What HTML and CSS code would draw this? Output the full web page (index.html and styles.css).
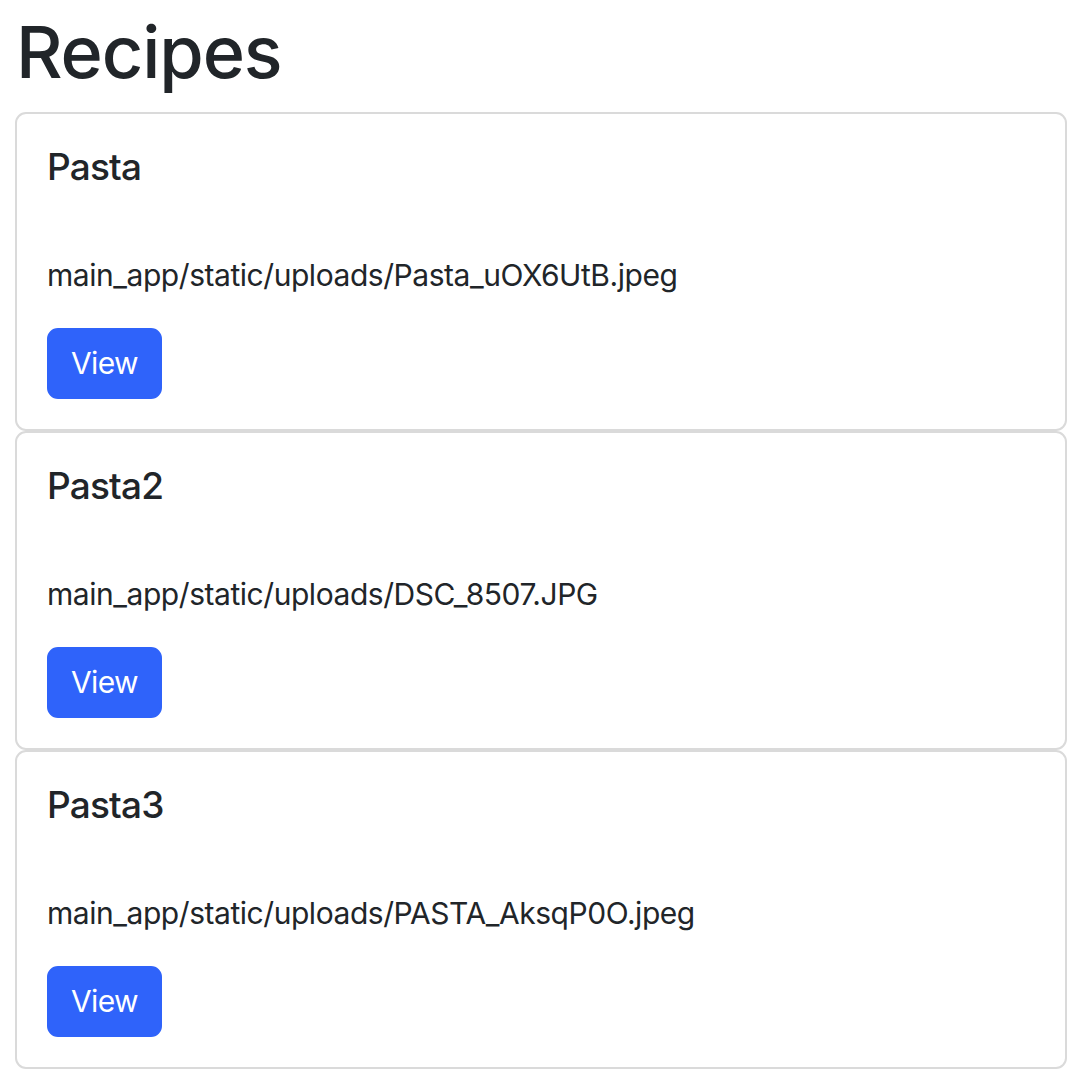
FILE: index.html
```html
<!DOCTYPE html>
<html>
<head>
<meta charset="utf-8">
<link rel="stylesheet" href="styles.css">
</head>
<body>
<main class="page">
  <h1 class="page-title">Recipes</h1>
  <div class="card">
    <h5 class="card-title">Pasta</h5>
    <p class="card-text">main_app/static/uploads/Pasta_uOX6UtB.jpeg</p>
    <a class="btn" href="#">View</a>
  </div>
  <div class="card">
    <h5 class="card-title">Pasta2</h5>
    <p class="card-text">main_app/static/uploads/DSC_8507.JPG</p>
    <a class="btn" href="#">View</a>
  </div>
  <div class="card">
    <h5 class="card-title">Pasta3</h5>
    <p class="card-text">main_app/static/uploads/PASTA_AksqP0O.jpeg</p>
    <a class="btn" href="#">View</a>
  </div>
</main>
</body>
</html>
```

FILE: styles.css
```css
* { box-sizing: border-box; }
html, body { margin: 0; padding: 0; background: #fff; }
body {
  font-family: Inter, "Helvetica Neue", Arial, sans-serif;
  color: #212529;
}
.page {
  padding: 7px 19px 0 15px;
  display: flex;
  flex-direction: column;
}
.page-title {
  margin: 0 0 15px 1px;
  font-size: 72px;
  font-weight: 500;
  line-height: 90px;
  letter-spacing: -1.1px;
}
.card {
  border: 2px solid #dadada;
  border-radius: 11px;
  padding: 30px;
  display: flex;
  flex-direction: column;
  align-items: flex-start;
}
.card-title {
  margin: 0 0 15px;
  font-size: 37px;
  font-weight: 500;
  line-height: 45px;
  letter-spacing: -0.8px;
}
.card-text {
  margin: 49px 0 30px;
  font-size: 30px;
  line-height: 45px;
  letter-spacing: -0.45px;
}
.btn {
  display: inline-block;
  background: #2f63fa;
  color: #fff;
  text-decoration: none;
  font-size: 30px;
  line-height: 45px;
  padding: 11px 22px;
  border: 2px solid #2f63fa;
  border-radius: 11px;
  letter-spacing: -0.6px;
}
```
